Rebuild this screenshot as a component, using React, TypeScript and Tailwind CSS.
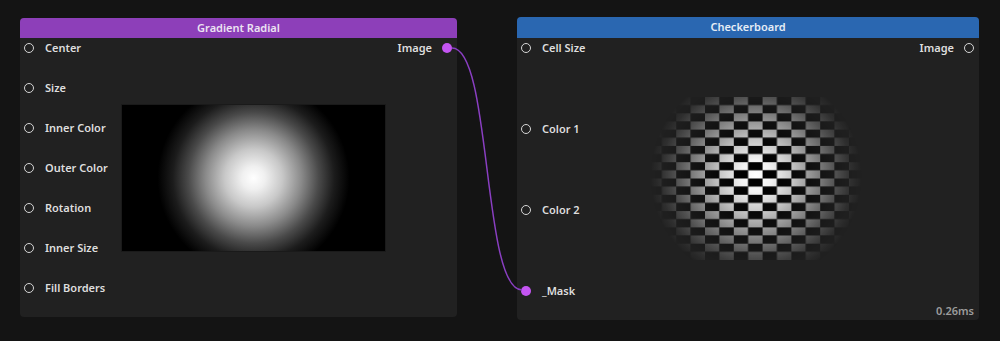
import React from 'react';

const font = { fontFamily: '"Noto Sans", "Open Sans", sans-serif' };

function InSocket({ label, filled }: { label: string; filled?: boolean }) {
  return (
    <div className="flex h-5 items-center">
      {filled ? (
        <span className="ml-[4px] h-[10px] w-[10px] rounded-full bg-[#c455f2]" />
      ) : (
        <span className="ml-[4px] h-[10px] w-[10px] rounded-full border-[1.8px] border-[#d6d6d6]" />
      )}
      <span className="ml-[11px] text-[11px] font-semibold text-[#dedede] whitespace-nowrap">{label}</span>
    </div>
  );
}

function OutSocket({ label, filled }: { label: string; filled?: boolean }) {
  return (
    <div className="flex h-5 items-center justify-end">
      <span className="mr-[10px] text-[11px] font-semibold text-[#dedede]">{label}</span>
      {filled ? (
        <span className="mr-[5px] h-[10px] w-[10px] rounded-full bg-[#c455f2]" />
      ) : (
        <span className="mr-[5px] h-[10px] w-[10px] rounded-full border-[1.8px] border-[#d6d6d6]" />
      )}
    </div>
  );
}

function Checker() {
  return (
    <svg width="290" height="163" viewBox="0 0 290 163">
      <defs>
        <pattern id="chk" x="7.6" y="0" width="28.8" height="16.3" patternUnits="userSpaceOnUse">
          <rect x="0" y="0" width="14.4" height="8.15" fill="#fff" />
          <rect x="14.4" y="0" width="14.4" height="8.15" fill="#000" />
          <rect x="0" y="8.15" width="14.4" height="8.15" fill="#000" />
          <rect x="14.4" y="8.15" width="14.4" height="8.15" fill="#fff" />
        </pattern>
        <radialGradient id="fade" cx="145" cy="79" r="106" gradientUnits="userSpaceOnUse">
          <stop offset="0" stopColor="#fff" />
          <stop offset="0.15" stopColor="#f0f0f0" />
          <stop offset="0.35" stopColor="#bcbcbc" />
          <stop offset="0.55" stopColor="#7a7a7a" />
          <stop offset="0.75" stopColor="#383838" />
          <stop offset="0.9" stopColor="#101010" />
          <stop offset="1" stopColor="#000" />
        </radialGradient>
        <mask id="m" maskUnits="userSpaceOnUse" x="0" y="0" width="290" height="163">
          <rect width="290" height="163" fill="url(#fade)" />
        </mask>
      </defs>
      <rect width="290" height="163" fill="url(#chk)" mask="url(#m)" />
    </svg>
  );
}

export default function App() {
  return (
    <div className="relative h-[341px] w-[1000px] overflow-hidden bg-[#141414]" style={font}>
      {/* Gradient Radial node */}
      <div className="absolute left-[20px] top-[18px] flex h-[299px] w-[437px] flex-col overflow-hidden rounded-[4px] bg-[#212121]">
        <div className="flex h-5 items-center justify-center bg-[#8d3fb9] text-[11px] font-semibold text-[#ece4f2]">
          Gradient Radial
        </div>
        <div className="flex flex-1">
          <div className="flex w-[101px] flex-col gap-5">
            <InSocket label="Center" />
            <InSocket label="Size" />
            <InSocket label="Inner Color" />
            <InSocket label="Outer Color" />
            <InSocket label="Rotation" />
            <InSocket label="Inner Size" />
            <InSocket label="Fill Borders" />
          </div>
          <div className="mt-[66px] h-[148px] w-[265px] border border-[#1a1a1a] bg-[radial-gradient(circle_96px_at_50%_50%,#fff_0%,#f0f0f0_12%,#c8c8c8_30%,#8a8a8a_50%,#4a4a4a_68%,#1c1c1c_84%,#000_100%)]" />
          <div className="flex-1">
            <OutSocket label="Image" filled />
          </div>
        </div>
      </div>

      {/* Checkerboard node */}
      <div className="absolute left-[517px] top-[17px] flex h-[303px] w-[462px] flex-col overflow-hidden rounded-[4px] bg-[#212121]">
        <div className="flex h-[21px] items-center justify-center bg-[#2a67b1] text-[11px] font-semibold text-[#e6edf6]">
          Checkerboard
        </div>
        <div className="relative flex flex-1">
          <div className="flex w-[94px] flex-col gap-[61px]">
            <InSocket label="Cell Size" />
            <InSocket label="Color 1" />
            <InSocket label="Color 2" />
            <InSocket label="_Mask" filled />
          </div>
          <div className="mt-[59px]">
            <Checker />
          </div>
          <div className="flex-1">
            <OutSocket label="Image" />
          </div>
          <div className="absolute bottom-[1px] right-[5px] text-[11px] font-semibold text-[#9c9c9c]">0.26ms</div>
        </div>
      </div>

      {/* wire */}
      <svg className="pointer-events-none absolute left-0 top-0" width="1000" height="341">
        <path d="M452 48 C 492 48, 482 290, 522 290" fill="none" stroke="#8a3fc2" strokeWidth="1.5" />
      </svg>
    </div>
  );
}
